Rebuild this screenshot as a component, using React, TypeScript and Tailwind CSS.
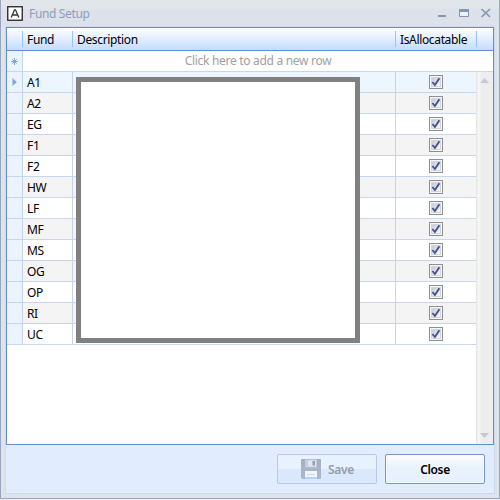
import React from "react";

const funds = ["A1", "A2", "EG", "F1", "F2", "HW", "LF", "MF", "MS", "OG", "OP", "RI", "UC"];

function Check() {
  return (
    <svg width="14" height="14" viewBox="0 0 14 14" className="block">
      <defs>
        <linearGradient id="box" x1="0" y1="0" x2="1" y2="1">
          <stop offset="0" stopColor="#c3c9d2" />
          <stop offset="1" stopColor="#fbfbfc" />
        </linearGradient>
      </defs>
      <rect x="0.5" y="0.5" width="13" height="13" fill="#f6f6f6" stroke="#8e8f8f" />
      <rect x="2.5" y="2.5" width="9" height="9" fill="url(#box)" stroke="#d3d6db" />
      <path d="M3.4 7 L5.9 10 L10.4 3.2" fill="none" stroke="#435294" strokeWidth="1.9" />
    </svg>
  );
}

function TitleBar() {
  return (
    <div className="flex h-[26px] shrink-0 items-center pl-[6px] pr-[7px] pt-[1px] bg-linear-to-b from-[#e1e6eb] from-30% to-[#dde2ea] to-40%">
      <svg width="16" height="15" viewBox="0 0 16 15" className="shrink-0">
        <rect x="0.75" y="0.75" width="14.5" height="13.5" fill="#fff" stroke="#222" strokeWidth="1.3" />
        <path d="M4.2 11.5 L7.5 3.8 H8.5 L11.8 11.5 M5.6 9 H10.4" fill="none" stroke="#333" strokeWidth="1.3" />
      </svg>
      <span className="ml-[6px] leading-4 text-[#8d9dbb]">Fund Setup</span>
      <svg width="56" height="13" viewBox="0 0 56 13" className="ml-auto shrink-0">
        <rect x="2" y="8" width="8" height="2" fill="#8295b2" />
        <path d="M23.5 2.5 H32.5 V9.5 H23.5 Z" fill="#edf1f6" stroke="#8295b2" />
        <rect x="23" y="2" width="10" height="3" fill="#8295b2" />
        <path d="M45.5 2 L54 10 M54 2 L45.5 10" stroke="#8295b2" strokeWidth="1.7" />
      </svg>
    </div>
  );
}

const separator = "h-[16px] w-px bg-[#9bc3f5]";

function Header() {
  return (
    <div className="flex h-[23px] shrink-0 items-center border-b border-[#628fcd] bg-linear-to-b from-white to-[#c3dcff] text-black">
      <span className="w-[15px]" />
      <span className={separator} />
      <span className="w-[49px] pl-[4px] pt-[1px]">Fund</span>
      <span className={separator} />
      <span className="w-[322px] pl-[4px] pt-[1px]">Description</span>
      <span className={separator} />
      <span className="w-[80px] pl-[4px] pt-[1px]">IsAllocatable</span>
      <span className={separator} />
    </div>
  );
}

function NewRow() {
  return (
    <div className="flex h-[21px] shrink-0 border-b border-[#c8d6ea] bg-white">
      <div className="flex w-[16px] items-center justify-center border-r border-[#c3d5ed] bg-[#ebf3ff]">
        <svg width="9" height="9" viewBox="0 0 9 9">
          <path d="M4.5 1 V8 M1 4.5 H8 M2.3 2.3 L6.7 6.7 M6.7 2.3 L2.3 6.7" stroke="#84a5d6" strokeWidth="1" />
        </svg>
      </div>
      <div className="flex-1 text-center leading-[20px] tracking-[-0.3px] text-[#a0a0a0]">Click here to add a new row</div>
    </div>
  );
}

function Row({ name, index }: { name: string; index: number }) {
  const bg = index === 0 ? "bg-[#edf5ff]" : index % 2 ? "bg-[#f4f4f4]" : "bg-white";
  return (
    <div className={`flex h-[21px] border-b border-[#c6d6ed] ${bg}`}>
      <div className="flex w-[16px] shrink-0 items-center justify-center border-r border-[#c3d5ed] bg-[#ebf3ff]">
        {index === 0 && (
          <svg width="5" height="8" viewBox="0 0 5 8">
            <path d="M0.5 0 L4.8 4 L0.5 8 Z" fill="#84a5d6" />
          </svg>
        )}
      </div>
      <div className="w-[50px] shrink-0 border-r border-[#c3d5ed] pl-[4px] leading-[21px] text-black">{name}</div>
      <div className="w-[323px] shrink-0 border-r border-[#c3d5ed]" />
      <div className="flex w-[80px] shrink-0 justify-center pt-[3px]">
        <Check />
      </div>
    </div>
  );
}

function ScrollBar() {
  return (
    <div className="flex w-[17px] flex-col items-center justify-between bg-linear-to-r from-[#e8e8e8] from-5% via-[#f7f7f7] via-15% to-[#ededed] to-35% pb-[6px] pr-[1px] pt-[6px]">
      <svg width="9" height="5" viewBox="0 0 9 5"><path d="M0 5 L4.5 0 L9 5 Z" fill="#c6c7d0" /></svg>
      <svg width="9" height="5" viewBox="0 0 9 5"><path d="M0 0 L4.5 5 L9 0 Z" fill="#c6c7d0" /></svg>
    </div>
  );
}

function SaveIcon() {
  return (
    <svg width="20" height="20" viewBox="0 0 20 20">
      <defs>
        <linearGradient id="disk" x1="0" y1="0" x2="0" y2="1">
          <stop offset="0" stopColor="#a5afc0" />
          <stop offset="1" stopColor="#aab8ce" />
        </linearGradient>
      </defs>
      <path d="M1 0 H19 Q20 0 20 1 V19 Q20 20 19 20 H1.5 L0 18.5 V1 Q0 0 1 0 Z" fill="url(#disk)" />
      <rect x="4" y="0.5" width="12" height="8" fill="#c5cedc" />
      <rect x="7" y="1.5" width="8" height="6" fill="#e0e7f1" />
      <rect x="11.5" y="2" width="2.5" height="4.5" fill="#929eb2" />
      <rect x="4" y="12" width="12" height="8" fill="#f0f5fc" />
      <path d="M6 15.5 H14" stroke="#ccd7e7" />
      <rect x="4" y="18" width="12" height="2" fill="#b5d3f5" />
    </svg>
  );
}

export default function App() {
  return (
    <div className="flex h-[500px] w-[500px] flex-col bg-[#eef0f4] font-['Noto_Sans','Open_Sans',sans-serif] text-[12px] tracking-[-0.35px]">
      <div className="relative flex h-[499px] flex-col border-x border-b border-[#97a5bd] bg-[#dfe3eb]">
        <TitleBar />
        <div className="mx-[4px] flex h-[468px] flex-col border border-[#cbd9ea] bg-[#e1edff]">
          <div className="flex h-[418px] w-[488px] shrink-0 flex-col border border-[#628fcd] bg-white">
            <Header />
            <NewRow />
            <div className="flex flex-1">
              <div className="w-[469px] shrink-0">
                {funds.map((name, index) => (
                  <Row key={name} name={name} index={index} />
                ))}
              </div>
              <ScrollBar />
            </div>
          </div>
          <div className="flex justify-end gap-[8px] pr-[9px] pt-[9px] font-semibold">
            <button disabled className="flex h-[30px] w-[100px] items-center justify-center gap-[7px] rounded-[2px] border border-[#b7c9e4] bg-linear-to-b from-[#e8f1fe] from-50% to-[#dae8fb] to-50% pl-[1px] text-[#949dab]">
              <SaveIcon />
              <span className="pt-[1px]">Save</span>
            </button>
            <button className="flex h-[30px] w-[100px] items-center justify-center rounded-[2px] border border-[#7896c4] bg-linear-to-b from-[#fbfdff] via-[#e9f1fb] via-50% to-[#e6f1ff] pt-[1px] text-black shadow-[inset_0_0_0_1px_#f5faff]">
              Close
            </button>
          </div>
        </div>
        <div className="absolute left-[75px] top-[77px] h-[266px] w-[284px] border-[5px] border-[#808080] bg-white" />
      </div>
    </div>
  );
}
